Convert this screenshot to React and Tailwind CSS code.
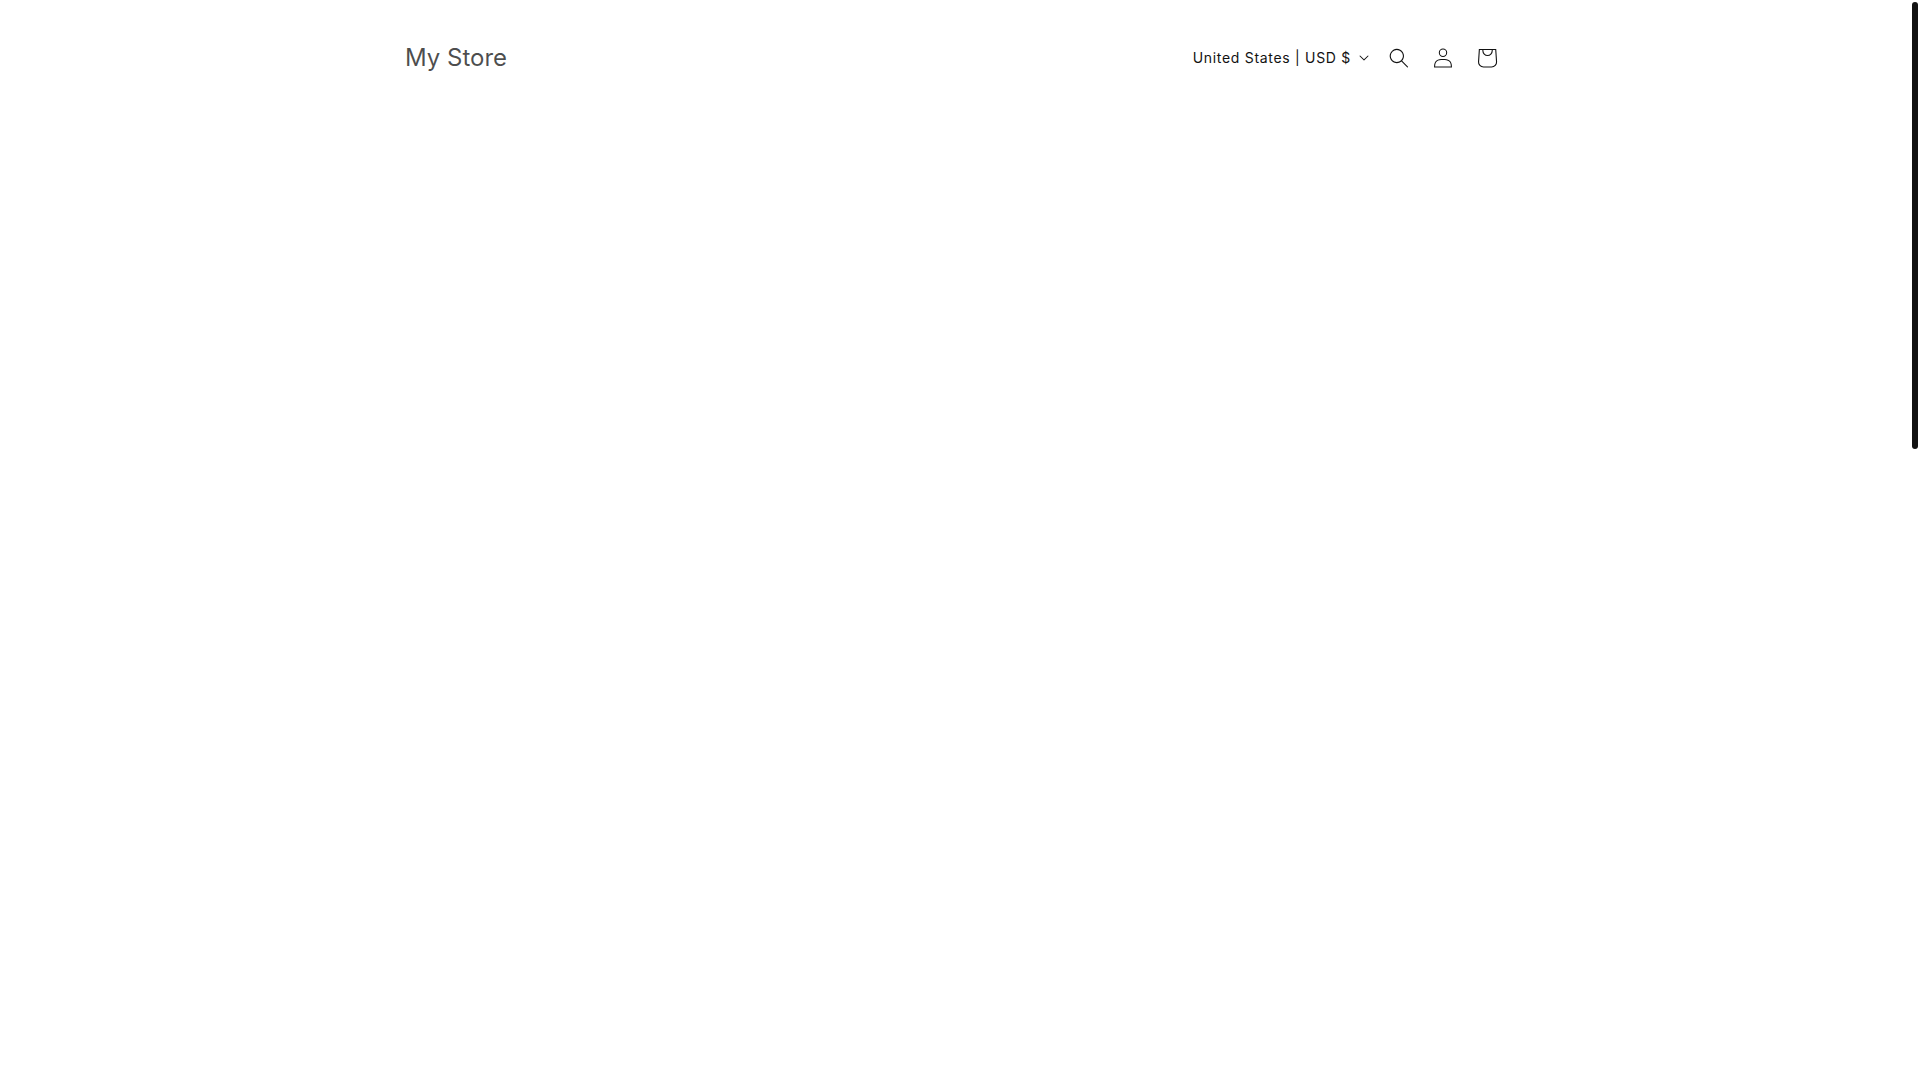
import React from 'react';

const CaretIcon = () => (
  <svg className="w-[10px] h-[6px]" viewBox="0 0 10 6" fill="currentColor" aria-hidden="true">
    <path
      fillRule="evenodd"
      clipRule="evenodd"
      d="M9.354.646a.5.5 0 00-.708 0L5 4.293 1.354.646a.5.5 0 00-.708.708l4 4a.5.5 0 00.708 0l4-4a.5.5 0 000-.708z"
    />
  </svg>
);

const SearchIcon = () => (
  <svg className="size-5" viewBox="0 0 18 19" fill="currentColor" aria-hidden="true">
    <path
      fillRule="evenodd"
      clipRule="evenodd"
      d="M11.03 11.68A5.784 5.784 0 112.85 3.5a5.784 5.784 0 018.18 8.18zm.26 1.12a6.78 6.78 0 11.72-.7l5.4 5.4a.5.5 0 11-.71.7l-5.41-5.4z"
    />
  </svg>
);

const AccountIcon = () => (
  <svg className="size-5" viewBox="0 0 18 19" fill="currentColor" aria-hidden="true">
    <path
      fillRule="evenodd"
      clipRule="evenodd"
      d="M6 4.5a3 3 0 116 0 3 3 0 01-6 0zm3-4a4 4 0 100 8 4 4 0 000-8zm5.58 12.15c1.12.82 1.83 2.24 1.91 4.85H1.51c.08-2.6.79-4.03 1.9-4.85C4.66 11.75 6.5 11.5 9 11.5s4.35.26 5.58 1.15zM9 10.5c-2.5 0-4.65.24-6.17 1.35C1.27 12.98.5 14.93.5 18v.5h17V18c0-3.07-.77-5.02-2.33-6.15-1.52-1.1-3.67-1.35-6.17-1.35z"
    />
  </svg>
);

const CartIcon = () => (
  <svg className="size-11" viewBox="0 0 40 40" fill="currentColor" aria-hidden="true">
    <path
      fillRule="evenodd"
      d="M15.75 11.8h-3.16l-.77 11.6a5 5 0 0 0 4.99 5.34h7.38a5 5 0 0 0 4.99-5.33l-.78-11.61zm0 1h-2.22l-.71 10.67a4 4 0 0 0 3.99 4.27h7.38a4 4 0 0 0 4-4.27l-.72-10.67h-2.22v.63a4.75 4.75 0 1 1-9.5 0zm8.5 0h-7.5v.63a3.75 3.75 0 1 0 7.5 0z"
    />
  </svg>
);

const Header = () => (
  <header className="mx-auto flex w-full max-w-[1200px] items-center justify-between py-9 pl-[50px] pr-[46px]">
    <h1 className="text-2xl font-normal text-[#121212]/75">
      <a href="#">My Store</a>
    </h1>

    <div className="flex items-center">
      {/* Country and currency */}
      <button type="button" className="mr-2 flex h-11 items-center gap-2 text-sm tracking-wider" aria-expanded="false">
        <span>United States | USD $</span>
        <CaretIcon />
      </button>

      <button type="button" className="flex size-11 items-center justify-center" aria-label="Search">
        <SearchIcon />
      </button>
      <a href="#" className="flex size-11 items-center justify-center" aria-label="Log in">
        <AccountIcon />
      </a>
      <a href="#" className="flex size-11 items-center justify-center" aria-label="Cart">
        <CartIcon />
      </a>
    </div>
  </header>
);

const App = () => {
  return (
    <div className="min-h-screen bg-white pr-[10px] font-['Inter','Liberation_Sans',sans-serif] text-[#121212]">
      <Header />
      <main />

      {/* Scroll thumb */}
      <div className="fixed top-[2px] right-[2px] h-[447px] w-[6px] rounded-[3px] bg-[#121212]" />
    </div>
  );
};

export default App;
